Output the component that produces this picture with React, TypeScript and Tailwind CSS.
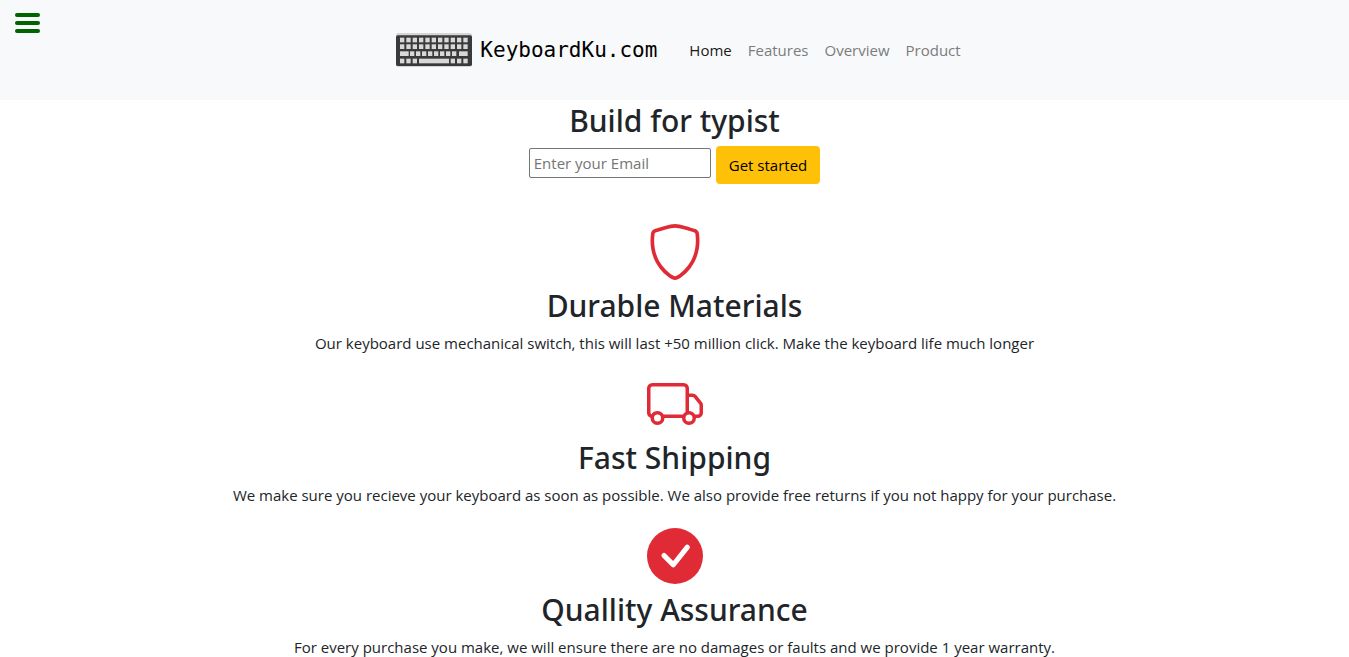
import { BsShield, BsTruck, BsCheckCircleFill } from "react-icons/bs";
import type { IconType } from "react-icons";

const keyRows: { y: number; keys: [number, number][] }[] = [
  { y: 14, keys: Array.from({ length: 11 }, (_, i) => [12 + i * 19, 13]) },
  { y: 34, keys: Array.from({ length: 11 }, (_, i) => [12 + i * 19, 13]) },
  {
    y: 55,
    keys: [
      [12, 26],
      ...Array.from({ length: 8 }, (_, i): [number, number] => [42 + i * 18, 13]),
      [189, 26],
    ],
  },
  {
    y: 77,
    keys: [[12, 13], [31, 13], [50, 13], [69, 90], [164, 13], [183, 13], [202, 13]],
  },
];

function KeyboardLogo() {
  return (
    <svg viewBox="0 0 228 102" className="h-[34px] w-[76px]" aria-hidden="true">
      <rect x="0" y="0" width="228" height="102" rx="7" fill="#d3d5d6" />
      <rect x="0" y="7" width="228" height="92" rx="5" fill="#3a3a3a" />
      {keyRows.map((row) =>
        row.keys.map(([x, w]) => (
          <rect key={`${row.y}-${x}`} x={x} y={row.y} width={w} height="14" fill="#d8d8d8" />
        )),
      )}
    </svg>
  );
}

const links = ["Home", "Features", "Overview", "Product"];

const features: { icon: IconType; title: string; text: string }[] = [
  {
    icon: BsShield,
    title: "Durable Materials",
    text: "Our keyboard use mechanical switch, this will last +50 million click. Make the keyboard life much longer",
  },
  {
    icon: BsTruck,
    title: "Fast Shipping",
    text: "We make sure you recieve your keyboard as soon as possible. We also provide free returns if you not happy for your purchase.",
  },
  {
    icon: BsCheckCircleFill,
    title: "Quallity Assurance",
    text: "For every purchase you make, we will ensure there are no damages or faults and we provide 1 year warranty.",
  },
];

export default function App() {
  return (
    <div className="bg-white font-['Open_Sans',sans-serif] text-[15px] text-[#212529]">
      <header className="relative flex h-[100px] items-center justify-center bg-[#f8f9fa] pl-2">
        <button
          type="button"
          aria-label="Open menu"
          className="absolute top-[13px] left-[15px] flex flex-col gap-1"
        >
          <span className="h-1 w-[25px] rounded-sm bg-[#006400]" />
          <span className="h-1 w-[25px] rounded-sm bg-[#006400]" />
          <span className="h-1 w-[25px] rounded-sm bg-[#006400]" />
        </button>
        <a href="#home" className="flex items-center gap-2 text-black">
          <KeyboardLogo />
          <span className="font-['DejaVu_Sans_Mono',monospace] text-[21px] leading-[34px]">KeyboardKu.com</span>
        </a>
        <nav className="ml-8 flex gap-4">
          {links.map((link, i) => (
            <a
              key={link}
              href={`#${link.toLowerCase()}`}
              className={i === 0 ? "text-[#1a1a1a]" : "text-[#7b7c7d]"}
            >
              {link}
            </a>
          ))}
        </nav>
      </header>
      <main className="text-center">
        <h1 className="font-['Noto_Sans',sans-serif] text-[30px] leading-[42px] font-medium">Build for typist</h1>
        <form className="mt-1 flex justify-center gap-[5px]">
          <input
            type="email"
            aria-label="Email"
            placeholder="Enter your Email"
            className="mt-[2px] h-[30px] w-[182px] rounded-[2px] border border-[#767676] px-1 placeholder:text-[#757575]"
          />
          <button type="button" className="h-[38px] rounded bg-[#ffc107] px-[13px] text-black">
            Get started
          </button>
        </form>
        <div className="mt-10 flex flex-col gap-[21px]">
          {features.map(({ icon: Icon, title, text }) => (
            <section key={title} className="flex flex-col items-center">
              <Icon className="size-14 text-[#e02a36]" aria-hidden="true" />
              <h2 className="mt-[7px] font-['Noto_Sans',sans-serif] text-[30px] leading-[38px] font-medium">{title}</h2>
              <p className="mt-[6px] leading-6">{text}</p>
            </section>
          ))}
        </div>
      </main>
    </div>
  );
}
